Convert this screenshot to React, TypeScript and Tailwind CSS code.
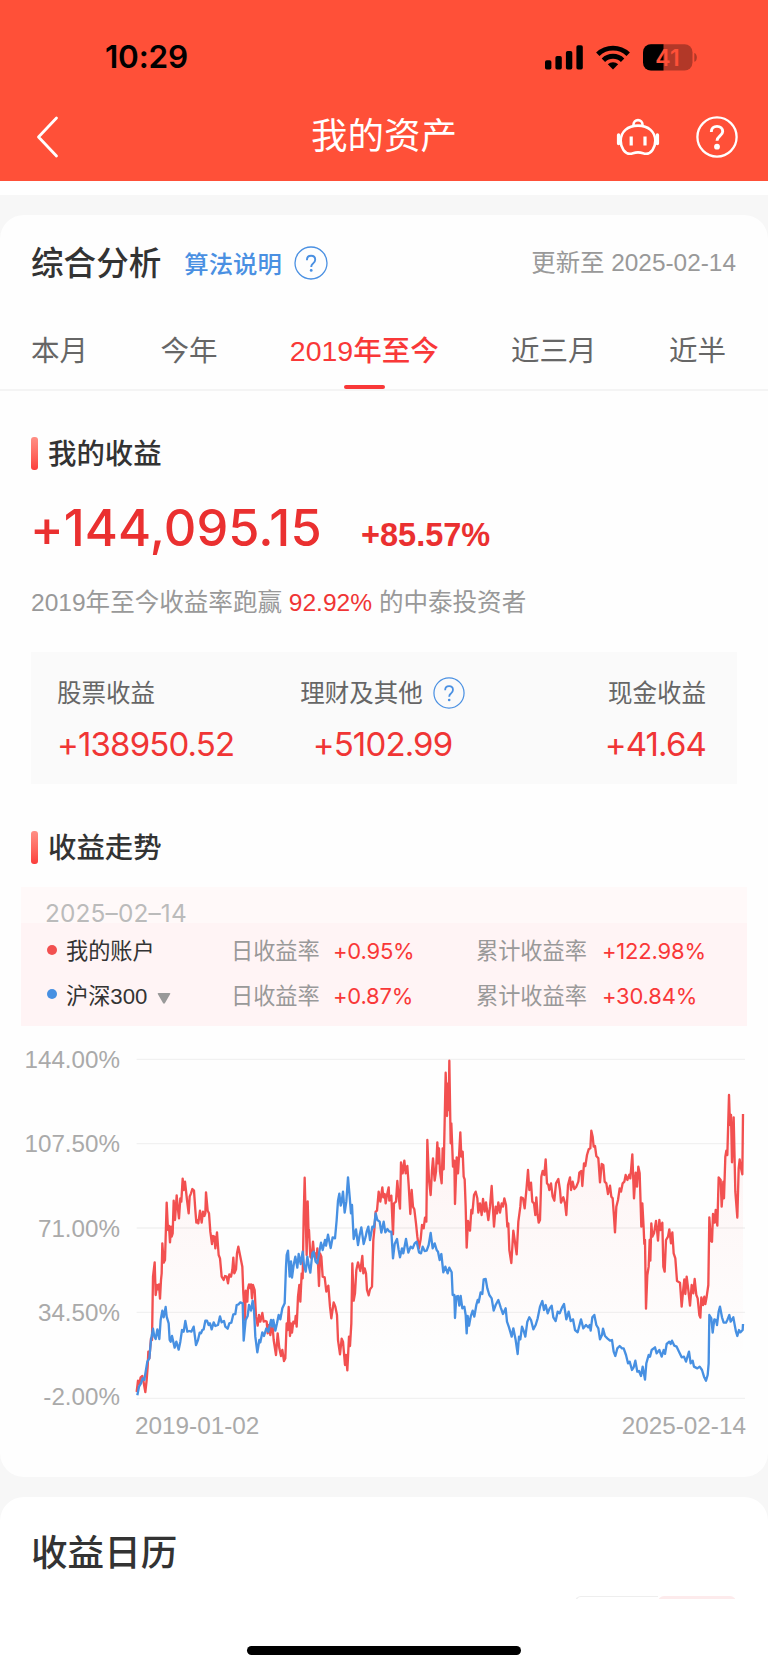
import clsx from "clsx";

const tabs = ["本月", "今年", "2019年至今", "近三月", "近半年"];

const profits = [
  { label: "股票收益", value: "+138950.52", help: false, align: "items-start" },
  { label: "理财及其他", value: "+5102.99", help: true, align: "items-center" },
  { label: "现金收益", value: "+41.64", help: false, align: "items-end" },
];

const legend = [
  { name: "我的账户", daily: "+0.95%", total: "+122.98%" },
  { name: "沪深300", daily: "+0.87%", total: "+30.84%" },
];

const yLabels = ["144.00%", "107.50%", "71.00%", "34.50%", "-2.00%"];
const gridLines = [58, 311, 564, 817, 1075];

// chart series, in viewBox units (3 units = 1px)
const accountLine =
  "50,1056 54,1022 58,1032 62,1012 67,1008 70,1022 76,1056 80,1020 83,980 85,935 88,955 93,895 96,900 99,710 104,667 107,765 111,735 115,748 117,733 120,776 123,720 125,700 127,610 131,668 135,660 140,488 144,570 147,558 150,607 153,560 155,590 158,580 161,482 165,540 170,466 173,500 177,535 181,475 184,485 188,416 191,450 195,425 201,480 206,520 209,470 213,460 217,447 222,452 226,510 229,548 232,540 235,550 240,512 245,548 249,515 253,528 256,520 258,457 263,512 267,520 271,575 276,612 279,588 283,590 286,625 291,577 296,645 300,655 305,710 311,720 315,708 320,710 324,730 328,703 333,710 337,690 340,653 343,700 348,688 351,640 355,620 360,645 367,680 370,760 375,840 377,752 382,785 384,745 387,733 391,745 393,733 396,775 399,735 404,750 408,830 413,857 417,825 421,845 427,819 431,845 436,843 440,845 443,880 447,855 451,885 457,850 461,900 468,945 473,880 478,925 483,948 487,930 492,963 496,955 500,850 503,870 506,801 510,888 513,850 516,878 520,845 525,850 527,828 530,860 534,770 538,735 541,785 545,700 548,715 551,530 554,413 560,645 563,484 566,590 567,570 571,650 575,655 579,605 583,650 586,640 590,655 592,625 597,738 600,640 604,650 608,710 614,712 619,755 625,737 630,800 634,835 641,787 646,800 651,825 654,900 660,943 665,896 669,905 675,975 678,945 682,991 687,890 690,918 694,850 697,670 701,782 705,760 709,690 714,667 721,693 727,648 730,700 734,685 738,700 741,750 746,766 750,748 756,740 760,600 763,570 767,515 771,512 776,455 781,485 787,442 790,472 794,462 797,490 801,465 806,442 808,482 814,467 819,583 822,490 828,485 832,423 836,470 840,506 843,367 848,400 853,362 857,400 862,378 866,435 871,522 875,450 879,500 883,508 888,550 892,590 897,625 902,598 906,555 911,565 915,533 919,545 922,300 927,420 932,465 936,390 939,355 944,422 948,395 952,307 955,370 957,325 960,395 965,430 968,325 971,388 977,98 981,228 984,130 986,210 988,62 992,310 994,250 999,380 1003,362 1005,492 1010,352 1014,400 1017,350 1021,277 1024,350 1028,335 1031,410 1034,418 1037,500 1040,623 1044,543 1050,572 1054,510 1057,520 1062,465 1067,455 1072,475 1075,518 1080,490 1085,525 1089,477 1094,515 1098,487 1105,540 1110,500 1115,438 1122,560 1127,500 1131,520 1135,487 1140,518 1145,490 1149,500 1153,475 1158,495 1162,560 1165,550 1168,630 1174,669 1180,572 1184,600 1190,643 1195,545 1201,500 1203,472 1209,475 1214,505 1220,440 1224,390 1228,450 1233,428 1237,485 1242,490 1246,525 1249,472 1253,525 1256,548 1260,540 1264,410 1268,393 1273,405 1277,358 1281,430 1285,435 1288,450 1293,430 1298,470 1303,482 1308,430 1315,417 1320,450 1323,488 1330,472 1335,490 1339,525 1344,435 1350,412 1353,450 1358,425 1363,447 1369,440 1375,425 1378,398 1384,393 1387,438 1392,370 1396,378 1401,345 1406,328 1411,325 1414,272 1418,290 1421,320 1425,318 1429,348 1435,355 1440,427 1445,372 1450,375 1454,425 1459,430 1464,462 1470,437 1474,470 1478,475 1482,530 1485,577 1489,500 1494,480 1499,445 1503,455 1508,430 1513,425 1517,405 1522,420 1528,404 1531,415 1537,343 1542,475 1547,398 1551,440 1555,380 1559,400 1564,560 1567,490 1571,565 1573,612 1575,600 1578,806 1582,705 1586,680 1589,600 1591,662 1594,550 1597,590 1602,580 1608,543 1612,580 1614,602 1618,540 1622,570 1627,548 1630,680 1634,695 1638,600 1644,590 1648,568 1653,610 1657,577 1661,640 1666,655 1671,723 1680,728 1685,800 1690,745 1693,718 1696,762 1700,710 1705,750 1710,797 1715,735 1720,760 1724,717 1729,765 1733,775 1738,825 1741,833 1744,772 1749,795 1753,770 1756,792 1760,770 1765,735 1768,532 1773,603 1776,605 1779,522 1784,548 1787,510 1792,557 1796,412 1802,420 1805,500 1810,425 1812,475 1816,350 1819,332 1822,345 1827,165 1830,255 1833,225 1836,367 1841,232 1846,455 1852,533 1856,385 1859,358 1863,385 1867,403 1869,222";

const indexLine =
  "52,1066 57,1040 63,1030 68,1015 73,1020 77,995 82,965 88,955 93,900 99,866 103,890 107,897 112,868 118,897 122,840 127,812 131,832 137,801 140,830 146,850 149,900 152,905 156,888 164,923 169,905 176,929 181,905 186,870 191,875 196,843 202,875 208,873 214,875 221,860 228,915 234,900 239,878 243,880 247,870 251,868 256,842 261,842 266,855 270,850 275,868 281,847 286,858 294,855 300,829 305,847 312,843 316,860 323,866 328,850 334,848 340,823 346,822 350,795 356,793 361,787 368,790 371,902 377,840 383,828 387,795 393,812 398,782 402,810 406,890 412,937 418,900 421,907 427,877 432,888 439,865 445,875 453,840 457,860 460,840 466,872 471,850 476,825 481,838 487,805 494,790 498,680 500,645 504,632 509,710 513,664 516,713 521,675 526,650 532,683 536,642 542,672 548,635 552,675 557,695 562,650 567,680 571,698 577,640 581,635 587,665 592,670 597,640 603,608 608,630 615,600 618,617 624,584 632,624 638,592 645,595 650,540 654,482 658,461 662,497 665,485 669,455 674,518 679,485 684,412 689,470 693,520 696,495 701,597 708,568 714,615 719,585 724,562 731,612 737,590 740,575 745,560 750,600 757,560 762,562 767,520 772,540 779,545 784,578 791,545 796,577 802,567 808,575 814,575 819,655 824,612 831,597 836,630 840,652 846,625 850,640 858,597 865,638 872,620 878,625 884,610 890,605 897,637 903,640 908,620 914,633 920,632 926,615 932,579 938,625 944,610 950,630 954,635 959,660 964,642 970,697 976,680 983,700 988,683 995,697 998,765 1003,765 1005,834 1009,770 1014,768 1018,797 1022,768 1027,805 1033,800 1037,825 1040,880 1043,828 1047,857 1052,830 1058,812 1063,830 1069,795 1073,780 1076,787 1082,757 1087,762 1091,718 1097,717 1102,745 1108,765 1115,775 1121,812 1127,795 1135,780 1142,802 1149,822 1157,805 1161,845 1167,862 1175,890 1180,865 1187,900 1193,942 1197,890 1201,898 1206,860 1211,873 1216,890 1222,845 1228,832 1233,840 1240,868 1247,855 1253,835 1260,800 1267,783 1272,810 1277,795 1283,820 1289,805 1295,797 1300,832 1307,843 1313,815 1319,820 1326,803 1332,792 1339,838 1346,815 1352,843 1359,838 1365,870 1373,877 1383,838 1390,865 1398,855 1405,862 1409,855 1412,872 1417,832 1423,825 1429,855 1435,865 1440,898 1446,885 1449,866 1455,888 1462,895 1470,902 1476,900 1481,935 1486,948 1492,925 1499,918 1506,925 1511,925 1518,945 1524,970 1529,965 1536,990 1541,982 1546,962 1552,995 1557,993 1563,1008 1568,980 1575,1019 1579,970 1586,945 1590,950 1595,930 1605,922 1610,940 1618,930 1625,950 1631,930 1635,942 1640,912 1648,905 1652,912 1656,902 1663,917 1670,920 1677,935 1685,952 1692,950 1698,965 1707,935 1712,970 1718,962 1722,980 1732,985 1739,980 1746,990 1752,1010 1758,1022 1763,1005 1766,970 1768,825 1774,835 1778,878 1783,838 1788,840 1791,855 1796,815 1800,800 1806,832 1811,848 1818,848 1822,840 1828,825 1832,845 1840,832 1845,860 1848,875 1852,888 1857,870 1861,877 1868,870 1869,852";

function HelpIcon({ className }: { className?: string }) {
  return (
    <svg viewBox="0 0 34 34" fill="none" className={clsx("shrink-0 text-[#4a90e2]", className)}>
      <circle cx="17" cy="17" r="16" stroke="currentColor" strokeWidth="1.3" />
      <path
        d="M12.9 14.2c0-2.7 1.7-4.4 4.2-4.4s4.1 1.6 4.1 3.9c0 1.9-1.1 2.8-2.2 3.8-1.2 1-1.8 1.7-1.8 3.5"
        stroke="currentColor"
        strokeWidth="1.9"
      />
      <circle cx="17.2" cy="24.4" r="1.4" fill="currentColor" />
    </svg>
  );
}

function StatusBar() {
  return (
    <div className="flex h-[92px] items-end justify-between pb-[21px] pl-[105px] pr-[70px]">
      <span className="font-['Inter',sans-serif] text-[31.5px] font-semibold leading-7 tracking-[-0.2px] text-black">
        10:29
      </span>
      <div className="flex items-center gap-[13px]">
        <svg width="38" height="25" viewBox="0 0 38 25" fill="#000">
          <rect x="0" y="15.2" width="6.4" height="9.3" rx="1.8" />
          <rect x="10.4" y="11" width="6.4" height="13.5" rx="1.8" />
          <rect x="20.9" y="6" width="6.4" height="18.5" rx="1.8" />
          <rect x="31.4" y="0.3" width="6.4" height="24.2" rx="1.8" />
        </svg>
        <svg width="34" height="25" viewBox="0 0 34 25" fill="none" stroke="#000" strokeWidth="4.9">
          <path d="M1.8 9.2a22 22 0 0 1 30.4 0" />
          <path d="M7.4 15.2a13.8 13.8 0 0 1 19.2 0" />
          <path d="M11.8 19.3a7.6 7.6 0 0 1 10.4 0L17 24.6z" fill="#000" stroke="none" />
        </svg>
        <svg width="55" height="27" viewBox="0 0 55 27">
          <clipPath id="battery">
            <rect x="0" y="0.2" width="49.5" height="26.4" rx="8" />
          </clipPath>
          <g clipPath="url(#battery)">
            <rect width="50" height="27" fill="#b23828" />
            <rect width="20.5" height="27" fill="#000" />
          </g>
          <path d="M51.3 9c3.4 1 3.4 7.8 0 8.8z" fill="#b23828" />
          <text x="24.5" y="22" textAnchor="middle" fill="#ff5038" className="font-['Inter',sans-serif] text-[23px] font-semibold">
            41
          </text>
        </svg>
      </div>
    </div>
  );
}

function NavBar() {
  return (
    <div className="flex h-[89px] items-center justify-between pl-9 pr-[30px] text-white">
      <div className="w-[116px]">
        <svg width="24" height="42" viewBox="0 0 24 42" fill="none" stroke="currentColor" strokeWidth="2.8">
          <path d="M20.5 2 2.5 21l18 19" strokeLinecap="round" strokeLinejoin="round" />
        </svg>
      </div>
      <h1 className="text-center text-[36.5px] font-normal leading-[40px]">我的资产</h1>
      <div className="flex items-center justify-end gap-[36px]">
        <svg width="44" height="42" viewBox="0 0 44 42" fill="none" stroke="currentColor" strokeWidth="2.6" strokeLinecap="round" strokeLinejoin="round">
          <path d="M22 9.6c10.5 0 17.3 6.4 17.3 15.2 0 7-4.2 13-9.3 13-2.7 0-3.6-1.4-8-1.4s-5.3 1.4-8 1.4c-5.1 0-9.3-6-9.3-13C4.7 16 11.5 9.6 22 9.6z" />
          <path d="M17.5 8.6a4.5 4.5 0 0 1 9 0" />
          <path d="M2.6 19v8.5M41.4 19v8.5" strokeWidth="3.4" />
          <path d="M15.2 20.500v9M29 20.500v9" strokeWidth="3.2" strokeLinecap="butt" />
        </svg>
        <svg width="42" height="42" viewBox="0 0 42 42" fill="none" stroke="currentColor">
          <circle cx="21" cy="21" r="19.6" strokeWidth="2.3" />
          <path d="M15.3 16c0-3.5 2.3-5.6 5.7-5.6s5.7 2.1 5.7 5.1c0 4.2-5.7 4.5-5.7 9.3" strokeWidth="2.9" />
          <circle cx="21" cy="30.7" r="2.9" fill="currentColor" stroke="none" />
        </svg>
      </div>
    </div>
  );
}

function SectionTitle({ children }: { children: string }) {
  return (
    <div className="flex h-[34px] items-center gap-[10px] pl-[31px]">
      <span className="h-[33px] w-[7px] rounded-[3px] bg-gradient-to-b from-[#ff8f85] to-[#fb3c3c]" />
      <h3 className="pt-0.5 text-[28.4px] font-medium leading-[34px] text-[#333]">{children}</h3>
    </div>
  );
}

function TrendChart() {
  return (
    <div className="flex pt-[14px]">
      <div className="flex w-[120px] shrink-0 flex-col gap-[60.3px] pt-[8px] text-right text-[24.2px] leading-6 text-[#aaa]">
        {yLabels.map((label) => (
          <span key={label}>{label}</span>
        ))}
      </div>
      <div className="ml-[15px] w-[611px]">
        <svg width="615" height="370" viewBox="45 0 1845 1110" fill="none">
          <defs>
            <linearGradient id="area" gradientUnits="userSpaceOnUse" x1="0" y1="60" x2="0" y2="960">
              <stop offset="0" stopColor="#f55353" stopOpacity="0.08" />
              <stop offset="1" stopColor="#f55353" stopOpacity="0" />
            </linearGradient>
          </defs>
          {gridLines.map((y) => (
            <path key={y} d={`M50 ${y}H1875`} stroke="#f1f1f1" strokeWidth="4" />
          ))}
          <polygon points={`${accountLine} 1869,1075 50,1075`} fill="url(#area)" />
          <polyline points={accountLine} stroke="#f25050" strokeWidth="7" strokeLinejoin="round" />
          <polyline points={indexLine} stroke="#4790e2" strokeWidth="7" strokeLinejoin="round" />
        </svg>
        <div className="flex justify-between text-[24.3px] leading-8 text-[#aaa]">
          <span>2019-01-02</span>
          <span>2025-02-14</span>
        </div>
      </div>
    </div>
  );
}

export default function App() {
  return (
    <div className="h-[1669px] w-[768px] overflow-hidden bg-[#f7f7f7] font-['Liberation_Sans','Noto_Sans_CJK_SC',sans-serif]">
      <header className="bg-[#ff5038]">
        <StatusBar />
        <NavBar />
      </header>
      <div className="h-[14px] bg-white" />

      <main className="mt-5 h-[1262px] rounded-3xl bg-[#fefefe]">
        {/* Title row */}
        <div className="flex h-[95px] items-center pl-[31px] pr-8">
          <h2 className="pt-1 text-[32.6px] font-medium text-[#333]">综合分析</h2>
          <span className="ml-[23px] pt-1.5 text-[24.4px] font-medium text-[#4a90e2]">算法说明</span>
          <HelpIcon className="ml-3 size-[34px]" />
          <span className="ml-auto pt-0.5 text-[24.4px] text-[#999]">更新至 2025-02-14</span>
        </div>

        {/* Range tabs */}
        <div className="h-[81px] border-b-2 border-[#f4f4f4] pl-[31px] pr-[41px]">
          <div className="flex h-full gap-[72.4px] overflow-hidden whitespace-nowrap text-[28.5px] text-[#666]">
            {tabs.map((tab) => (
              <div
                key={tab}
                className={clsx(
                  "flex shrink-0 flex-col items-center pt-[21px] leading-10",
                  tab === "2019年至今" && "font-medium text-[#f93838]"
                )}
              >
                {tab}
                {tab === "2019年至今" && (
                  <span className="mt-[14px] h-1 w-[41px] rounded-sm bg-[#f93838]" />
                )}
              </div>
            ))}
          </div>
        </div>

        {/* My profit */}
        <div className="pt-[45px]">
          <SectionTitle>我的收益</SectionTitle>
          <div className="mt-[26px] flex h-[64px] items-baseline pl-[30px] text-[#ea3030]">
            <span className="w-[290px] font-['Inter',sans-serif] text-[50.5px] font-medium leading-[64px] tracking-[0.1px]">+144,095.15</span>
            <span className="ml-[41px] text-[32.5px] font-bold">+85.57%</span>
          </div>
          <p className="mt-[24px] pl-[31px] text-[24.55px] leading-[38px] text-[#999]">
            2019年至今收益率跑赢 <span className="text-[#f03535]">92.92%</span> 的中泰投资者
          </p>
        </div>

        <div className="mx-[31px] mt-[30px] grid h-[132px] grid-cols-[243px_165px_1fr] bg-[#fafafa] pl-[26px] pr-[31px] pt-[24px]">
          {profits.map((item) => (
            <div key={item.label} className={clsx("flex flex-col", item.align)}>
              <div className="flex h-[34px] items-center gap-[10px] whitespace-nowrap text-[24.5px] text-[#666]">
                <span className="pt-0.5">{item.label}</span>
                {item.help && <HelpIcon className="size-8" />}
              </div>
              <span className="mt-[16px] font-['Inter',sans-serif] text-[33px] leading-[36px] tracking-[-0.85px] text-[#f03535]">
                {item.value}
              </span>
            </div>
          ))}
        </div>

        {/* Trend */}
        <div className="pt-[46px]">
          <SectionTitle>收益走势</SectionTitle>
        </div>
        <div className="mx-[21px] mt-[23px] h-[139px] bg-[#fff4f5]">
          <div className="h-[36px] bg-[#fff9f9] pl-[24px] pt-[11px] font-['Inter',sans-serif] text-[24.4px] leading-[30px] tracking-[0.15px] text-[#bbb]">
            2025–02–14
          </div>
          <div className="pt-[6px]">
            {legend.map((row, i) => (
              <div key={row.name} className="flex h-[45px] items-center pl-[26px] text-[22.2px] leading-[45px]">
                <span className={clsx("mr-[9px] size-[10px] rounded-full", i === 0 ? "mb-1 bg-[#f25050]" : "mb-1.5 bg-[#4790e2]")} />
                <span className="flex w-[165px] items-center gap-[10px] text-[#333]">
                  {row.name}
                  {i === 1 && (
                    <svg width="14" height="11" viewBox="0 0 14 11" fill="#999" className="mt-1">
                      <path d="M1.5 0h11q1.3 0 .7 1L8 10q-1 1.3-2 0L.8 1q-.6-1 .7-1z" />
                    </svg>
                  )}
                </span>
                <span className="w-[102px] text-[#999]">日收益率</span>
                <span className="w-[143px] font-['Inter',sans-serif] text-[22px] tracking-[-0.2px] text-[#f93838]">{row.daily}</span>
                <span className="w-[126px] text-[#999]">累计收益率</span>
                <span className="font-['Inter',sans-serif] text-[22px] tracking-[-0.2px] text-[#f93838]">{row.total}</span>
              </div>
            ))}
          </div>
        </div>
        <TrendChart />
      </main>

      {/* Calendar card, cut off by the bottom bar */}
      <section className="mt-5 flex h-[172px] flex-col rounded-t-3xl bg-white">
        <h2 className="pl-[31px] pt-[31px] text-[36.6px] font-medium leading-[52px] text-[#333]">收益日历</h2>
        <div className="ml-auto mr-8 mt-[16px] flex h-[3px] w-[161px] overflow-hidden">
          <div className="h-5 flex-1 rounded-tl-md border-l border-t border-[#eee]" />
          <div className="h-5 w-[78px] rounded-t-md bg-[#fdebec]" />
        </div>
        <div className="mx-auto mt-[47px] h-[9px] w-[274px] rounded-full bg-black" />
      </section>
    </div>
  );
}
